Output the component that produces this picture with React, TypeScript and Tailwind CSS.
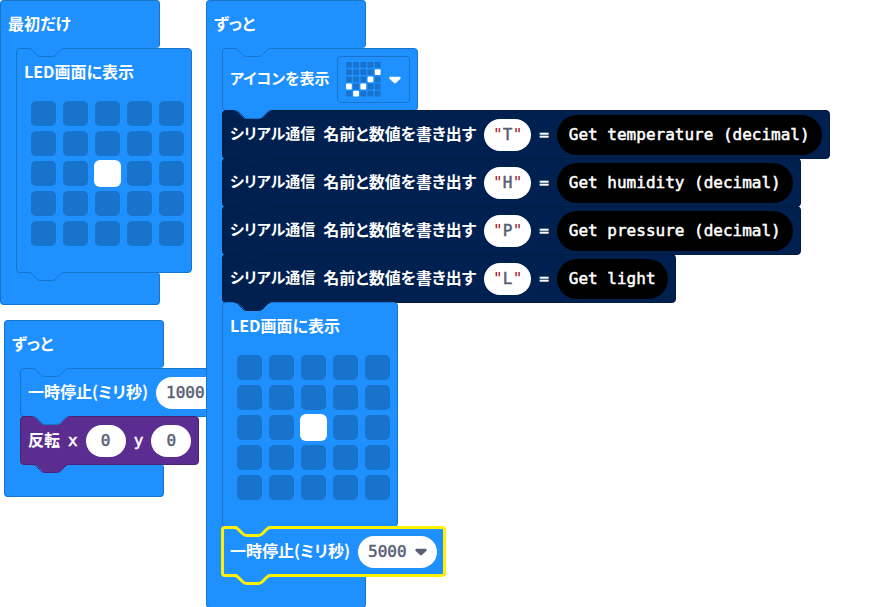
import type { ReactNode } from "react";

type Tone = "basic" | "serial" | "led" | "selected";

const blockTone: Record<Tone, string> = {
  basic: "-mb-px border bg-[#1e90ff] border-[#1873cc]",
  serial: "-mb-px border bg-[#002050] border-[#001a40]",
  led: "-mb-px border bg-[#5c2d91] border-[#4a2474]",
  selected: "-mx-px -mt-px -mb-0.5 border-3 bg-[#1e90ff] border-[#fff200]",
};

const notchTone: Record<Tone, string> = {
  basic: "fill-[#1e90ff] stroke-[#1873cc] stroke-1",
  serial: "fill-[#002050] stroke-[#001a40] stroke-1",
  led: "fill-[#5c2d91] stroke-[#4a2474] stroke-1",
  selected: "fill-[#1e90ff] stroke-[#fff200] stroke-3",
};

const curve =
  "c2 0 3 1 4 2l4 4c1 1 2 2 4 2h12c2 0 3 -1 4 -2l4 -4c1 -1 2 -2 4 -2";

function Notch({ tone, place }: { tone: Tone; place: string }) {
  return (
    <svg
      aria-hidden="true"
      width="37"
      height="11"
      className={`pointer-events-none absolute overflow-visible ${notchTone[tone]} ${place}`}
    >
      <path className="stroke-none" d={`M1.5 .5${curve}h-1l-2 -1.6H4l-2 1.6z`} />
      <path className="fill-none" d={`M.5 .5${curve}`} />
    </svg>
  );
}

function Block({
  tone,
  above,
  last = false,
  children,
}: {
  tone: Tone;
  above: Tone;
  last?: boolean;
  children: ReactNode;
}) {
  const selected = tone === "selected";
  const notch = selected ? "selected" : above;
  return (
    <div className={`relative w-fit rounded ${last ? "z-10" : ""} ${blockTone[tone]}`}>
      <Notch tone={notch} place={selected ? "-top-0.5 left-2.5" : "-top-px left-[11px]"} />
      {children}
      {last && <Notch tone={tone} place={selected ? "top-full mt-px left-2.5" : "top-full left-[11px]"} />}
    </div>
  );
}

function Label({ children, small = false }: { children: ReactNode; small?: boolean }) {
  return (
    <span
      className={`font-['Noto_Sans_CJK_JP',sans-serif] font-bold [-webkit-text-stroke:0] ${small ? "pb-0.5 text-[15px]" : "pb-1 text-base"}`}
    >
      {children}
    </span>
  );
}

function Row({ children }: { children: ReactNode }) {
  return <div className="flex h-[47px] items-center gap-2 px-[7px]">{children}</div>;
}

function Stack({ title, place, children }: { title: string; place: string; children: ReactNode }) {
  return (
    <section className={`absolute isolate ${place}`}>
      <h2 className="flex h-12 w-40 items-center rounded rounded-bl-none border border-b-0 border-[#1873cc] bg-[#1e90ff] px-[7px]">
        <Label>{title}</Label>
      </h2>
      <div className="flex">
        <div className="-mr-1 w-5 border-l border-[#1873cc] bg-[#1e90ff]" />
        <div className="relative z-10">{children}</div>
      </div>
      <div className="h-[33px] w-40 rounded rounded-tl-none border border-t-0 border-[#1873cc] bg-[#1e90ff]" />
    </section>
  );
}

function LedBlock({ above, last = false }: { above: Tone; last?: boolean }) {
  return (
    <Block tone="basic" above={above} last={last}>
      <div role="group" aria-label="LED画面" className="h-[223px] px-[7px]">
        <div className="flex h-[47px] items-center">
          <Label>LED画面に表示</Label>
        </div>
        <div className="grid w-fit grid-cols-5 gap-x-[7px] gap-y-[5px] pt-[5px] pl-[7px]">
          {Array.from({ length: 25 }, (_, i) => (
            <input
              key={i}
              type="checkbox"
              aria-label={`LED ${(i % 5) + 1}, ${Math.floor(i / 5) + 1}`}
              defaultChecked={i === 12}
              className="block size-[25px] appearance-none rounded-[5px] bg-[#1873cc] checked:bg-white checked:ring-1 checked:ring-white"
            />
          ))}
        </div>
      </div>
    </Block>
  );
}

function NumberField({ label, value }: { label: string; value: string }) {
  return (
    <input
      aria-label={label}
      defaultValue={value}
      className="h-8 w-10 rounded-full bg-white text-center text-[#575e75]"
    />
  );
}

function Caret() {
  return (
    <svg aria-hidden="true" width="12" height="8" viewBox="0 0 12 8" className="fill-current">
      <path d="M1.8 .8h8.4c1.4 0 1.9 1.2 1 2.1L7.2 6.8c-.7.7-1.7.7-2.4 0L.8 2.9C-.1 2 .4.8 1.8.8z" />
    </svg>
  );
}

function PauseRow({ value }: { value: string }) {
  return (
    <>
      <Label>一時停止(ミリ秒)</Label>
      <span className="flex h-8 items-center gap-2 rounded-full bg-white px-2.5 text-[#575e75]">
        <input aria-label="一時停止(ミリ秒)" defaultValue={value} className="w-[39px] bg-transparent" />
        <button type="button" aria-label="時間を選ぶ">
          <Caret />
        </button>
      </span>
    </>
  );
}

function SerialBlock({ name, reporter, above }: { name: string; reporter: string; above: Tone }) {
  return (
    <Block tone="serial" above={above}>
      <Row>
        <Label small>シリアル通信</Label>
        <Label>名前と数値を書き出す</Label>
        <span className="flex h-8 w-[47px] items-center justify-center rounded-full bg-white text-[#a31515]">
          <span className="[-webkit-text-stroke:0]">"</span>
          <input
            aria-label="名前"
            defaultValue={name}
            className="w-2.5 bg-transparent text-center text-[#575e75]"
          />
          <span className="[-webkit-text-stroke:0]">"</span>
        </span>
        <span>=</span>
        <span className="flex h-10 items-center rounded-full bg-black px-3">{reporter}</span>
      </Row>
    </Block>
  );
}

const lit = [9, 13, 15, 17, 21];

function IconField() {
  return (
    <button
      type="button"
      aria-label="アイコンを選ぶ"
      className="flex h-[47px] w-[73px] items-center justify-between rounded border border-[#1873cc] px-2"
    >
      <svg aria-hidden="true" width="35" height="35" viewBox="0 0 35 35">
        {Array.from({ length: 25 }, (_, i) => (
          <rect
            key={i}
            x={(i % 5) * 7.2}
            y={Math.floor(i / 5) * 7.2}
            width="5.8"
            height="5.8"
            rx="1"
            className={lit.includes(i) ? "fill-white" : "fill-[#1873cc]"}
          />
        ))}
      </svg>
      <Caret />
    </button>
  );
}

export default function App() {
  return (
    <main className="relative h-screen w-full overflow-hidden bg-white font-['DejaVu_Sans_Mono','Noto_Sans_CJK_JP',monospace] text-base whitespace-nowrap text-white [-webkit-text-stroke:0.5px] [font-feature-settings:'palt']">
      <Stack title="最初だけ" place="top-0 left-0">
        <LedBlock above="basic" last />
      </Stack>

      <Stack title="ずっと" place="top-80 left-1">
        <Block tone="basic" above="basic">
          <Row>
            <PauseRow value="1000" />
          </Row>
        </Block>
        <Block tone="led" above="basic" last>
          <Row>
            <Label>反転</Label>
            <span>x</span>
            <NumberField label="x" value="0" />
            <span>y</span>
            <NumberField label="y" value="0" />
          </Row>
        </Block>
      </Stack>

      <Stack title="ずっと" place="top-0 left-[206px]">
        <Block tone="basic" above="basic">
          <div className="flex h-[61px] items-center gap-2 px-[7px]">
            <Label small>アイコンを表示</Label>
            <IconField />
          </div>
        </Block>
        <SerialBlock name="T" reporter="Get temperature (decimal)" above="basic" />
        <SerialBlock name="H" reporter="Get humidity (decimal)" above="serial" />
        <SerialBlock name="P" reporter="Get pressure (decimal)" above="serial" />
        <SerialBlock name="L" reporter="Get light" above="serial" />
        <LedBlock above="serial" />
        <Block tone="selected" above="basic" last>
          <div className="flex h-[45px] items-center gap-2 px-1.5">
            <PauseRow value="5000" />
          </div>
        </Block>
      </Stack>
    </main>
  );
}
